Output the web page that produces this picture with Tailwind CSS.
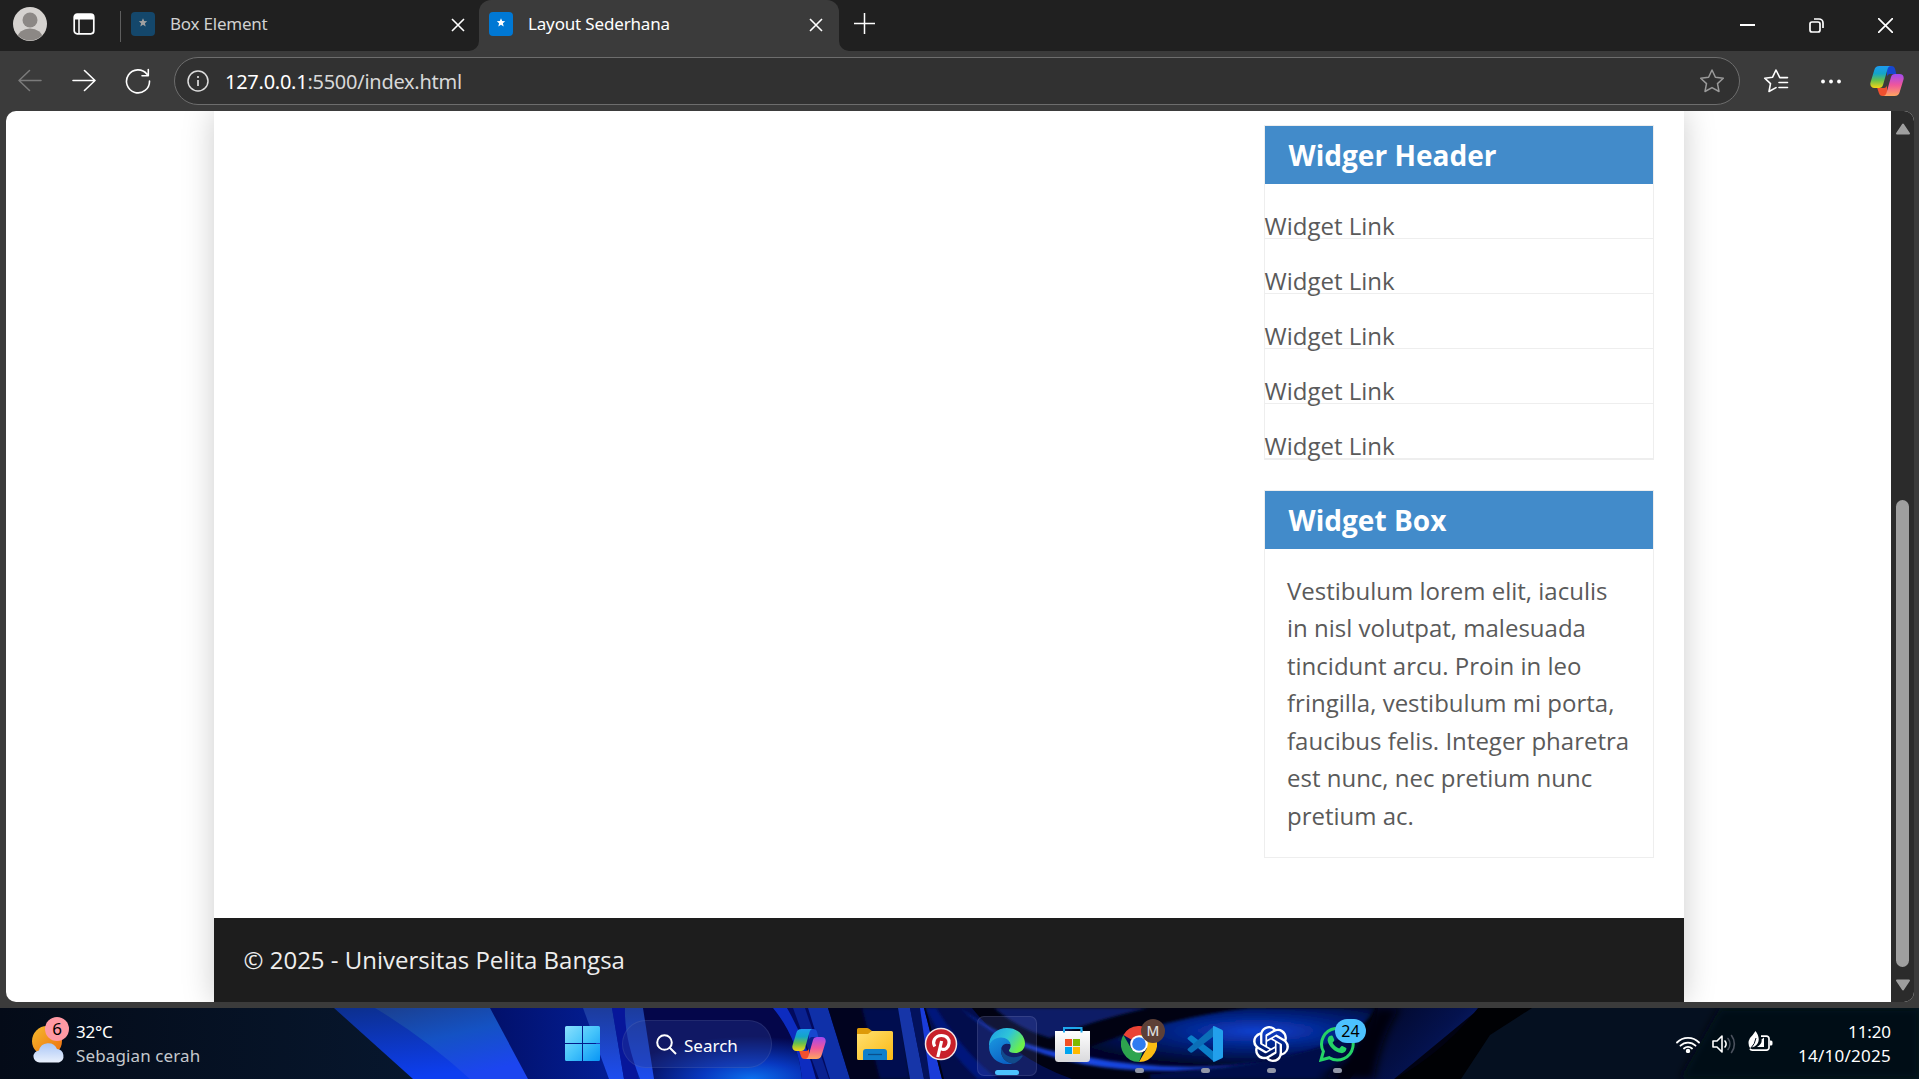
<!DOCTYPE html>
<html lang="id">
<head>
<meta charset="utf-8">
<title>Layout Sederhana</title>
<script src="https://cdn.jsdelivr.net/npm/@tailwindcss/browser@4"></script>
</head>
<body class="w-[1919px] h-[1079px] overflow-hidden flex flex-col bg-[#3b3b3b] font-['Noto_Sans',sans-serif]">

<!-- Tab strip -->
<header class="h-[51px] shrink-0 bg-[#202020] flex items-start">
  <div class="flex items-center h-12 pl-[13px]">
    <svg class="w-[34px] h-[34px]" viewBox="0 0 34 34"><defs><clipPath id="av"><circle cx="17" cy="17" r="16.5"/></clipPath></defs><circle cx="17" cy="17" r="17" fill="#d5d2cf"/><g fill="#8c8885" clip-path="url(#av)"><circle cx="17" cy="13" r="7.5"/><ellipse cx="17" cy="31" rx="12.500" ry="9.500"/></g></svg>
    <svg class="w-6 h-6 ml-[25px]" viewBox="0 0 24 24"><rect x="2.200" y="2.200" width="19.600" height="19.600" rx="3" fill="none" stroke="#fff" stroke-width="1.700"/><path d="M2 5a3 3 0 0 1 3-3h14a3 3 0 0 1 3 3v2.500H2z" fill="#fff"/><path d="M7 7v15" stroke="#fff" stroke-width="1.500"/></svg>
  </div>
  <div class="w-px h-[31px] bg-[#5e5e5e] mt-[11px] ml-6"></div>
  <div class="flex items-center h-12 ml-[10px] w-[337px] text-[#d0d0d0]">
    <svg class="w-6 h-6" viewBox="0 0 24 24"><rect width="24" height="24" rx="4" fill="#14476b"/><path d="M12 6.200l1.200 2.900 3 .2-2.300 2 .8 3.100-2.700-1.700-2.700 1.700.8-3.100-2.300-2 3-.2z" fill="#a0a0a0"/></svg>
    <span class="ml-[15px] pb-0.5 text-[17px] leading-none tracking-[-0.220px]">Box Element</span>
    <svg class="w-[14px] h-[14px] ml-auto mr-[3px] mt-px" viewBox="0 0 14 14"><path d="M1 1l12 12M13 1L1 13" stroke="#fff" stroke-width="1.600"/></svg>
  </div>
  <div class="relative flex items-center h-[51px] pb-[3px] ml-[11px] w-[360px] rounded-t-[12px] bg-[#3b3b3b] pl-[10px] text-white">
    <svg class="absolute left-[-10px] bottom-0 w-[10px] h-[10px]" viewBox="0 0 10 10"><path d="M10 0v10H0A10 10 0 0 0 10 0z" fill="#3b3b3b"/></svg>
    <svg class="absolute right-[-10px] bottom-0 w-[10px] h-[10px]" viewBox="0 0 10 10"><path d="M0 0v10h10A10 10 0 0 1 0 0z" fill="#3b3b3b"/></svg>
    <svg class="w-6 h-6" viewBox="0 0 24 24"><rect width="24" height="24" rx="4" fill="#0078d4"/><path d="M12 6.200l1.200 2.900 3 .2-2.300 2 .8 3.100-2.700-1.700-2.700 1.700.8-3.100-2.300-2 3-.2z" fill="#fff"/></svg>
    <span class="ml-[15px] pb-0.5 text-[17px] leading-none tracking-[-0.160px]">Layout Sederhana</span>
    <svg class="w-[14px] h-[14px] ml-auto mr-[16px] mt-px" viewBox="0 0 14 14"><path d="M1 1l12 12M13 1L1 13" stroke="#fff" stroke-width="1.600"/></svg>
  </div>
  <svg class="w-[21px] h-[21px] ml-[15px] mt-[13px]" viewBox="0 0 21 21"><path d="M10.500 0v21M0 10.500h21" stroke="#fff" stroke-width="1.500"/></svg>
  <div class="ml-auto flex items-center h-[51px] pr-[26px]">
    <svg class="w-[15px] h-[15px]" viewBox="0 0 15 15"><path d="M0 7h15" stroke="#fff" stroke-width="2"/></svg>
    <svg class="w-[15px] h-[15px] ml-[54px]" viewBox="0 0 15 15" fill="none" stroke="#fff" stroke-width="1.700"><rect x="1" y="4" width="10" height="10" rx="2"/><path d="M5 1h5a4 4 0 0 1 4 4v5"/></svg>
    <svg class="w-[15px] h-[15px] ml-[54px]" viewBox="0 0 15 15"><path d="M0 0l15 15M15 0L0 15" stroke="#fff" stroke-width="1.700"/></svg>
  </div>
</header>

<!-- Address bar -->
<nav class="h-[60px] shrink-0 flex items-center">
  <svg class="w-6 h-6 ml-[18px]" viewBox="0 0 24 24" fill="none" stroke="#7b7b7b" stroke-width="1.500" stroke-linecap="round" stroke-linejoin="round"><path d="M23 11.500H1M11.500 1.500L1 11.500l10.500 10"/></svg>
  <svg class="w-6 h-6 ml-[30px]" viewBox="0 0 24 24" fill="none" stroke="#fff" stroke-width="1.600" stroke-linecap="round" stroke-linejoin="round"><path d="M1 11.500h22M12.500 1.500L23 11.500l-10.500 10"/></svg>
  <svg class="w-[26px] h-[26px] ml-[29px]" viewBox="0 0 26 26" fill="none" stroke="#fff" stroke-width="1.600" stroke-linecap="round" stroke-linejoin="round"><path d="M24.500 13A11.500 11.500 0 1 1 22 6.200M23.300 1.500v6.300h-6.300"/></svg>
  <div class="ml-[23px] w-[1566px] h-12 rounded-full border border-[#6d6d6d] bg-[#313131] flex items-center pl-[12px] pr-[14px]">
    <svg class="w-[22px] h-[22px]" viewBox="0 0 22 22" fill="none" stroke="#ddd" stroke-width="1.500"><circle cx="11" cy="11" r="10"/><path d="M11 10v6M11 6v2" stroke-width="1.700"/></svg>
    <span class="ml-[16px] pt-0.5 text-[20px] leading-none tracking-[-0.260px] text-[#d8d8d8]"><span class="text-white">127.0.0.1</span>:5500/index.html</span>
    <svg class="w-[26px] h-[26px] ml-auto" viewBox="0 0 26 26" fill="none" stroke="#9a9a9a" stroke-width="1.500" stroke-linejoin="round"><path d="M13 2l3.400 7.200 7.900 1-5.800 5.400 1.500 7.900-7-3.900-7 3.900 1.500-7.900L1.700 10.200l7.900-1z"/></svg>
  </div>
  <svg class="w-[26px] h-[26px] ml-[23px]" viewBox="0 0 26 26" fill="none" stroke="#fff" stroke-width="1.600" stroke-linejoin="round" stroke-linecap="round"><path d="M24.500 9.600h-7.700L13 2 9.600 9.200l-7.900 1 5.800 5.400L6 23.500l7-3.900M16 14.500h8.500M16 19.500h8.500"/></svg>
  <svg class="w-5 h-5 ml-[32px]" viewBox="0 0 20 20" fill="#fff"><circle cx="2" cy="10.500" r="1.900"/><circle cx="10" cy="10.500" r="1.900"/><circle cx="18" cy="10.500" r="1.900"/></svg>
  <svg class="w-[34px] h-8 ml-[29px]" viewBox="0 0 34 32">
    <defs>
      <linearGradient id="cpA" x1="0" y1="0" x2="0" y2="1"><stop offset="0" stop-color="#1e9bf0"/><stop offset=".35" stop-color="#14a5c8"/><stop offset=".65" stop-color="#67c04c"/><stop offset="1" stop-color="#f8d314"/></linearGradient>
      <linearGradient id="cpB" x1="0" y1="0" x2="0" y2="1"><stop offset="0" stop-color="#a04af0"/><stop offset=".5" stop-color="#f0569c"/><stop offset="1" stop-color="#ffa660"/></linearGradient>
    </defs>
    <path d="M17 1h4.500c2 0 3 1 3.600 3l1.200 5H20c-1.500 0-2.500 1-3 2.500z" fill="#1747cf"/>
    <path d="M17 31h-4.500c-2 0-3-1-3.600-3l-1.700-5H14c1.500 0 2.500-1 3-2.500z" fill="#f0502f"/>
    <path d="M9.500 1H21c-2 0-3 1.500-3.500 3.200L13 20c-.6 2-1.800 3-4 3H4.500c-3.200 0-4.800-2.200-4-5.500L4.300 5C5 2.500 6.500 1 9.500 1z" fill="url(#cpA)"/>
    <path d="M24.500 31H13c2 0 3-1.500 3.500-3.200L21 12c.6-2 1.800-3 4-3h4.500c3.200 0 4.800 2.200 4 5.500L29.700 27c-.7 2.500-2.200 4-5.200 4z" fill="url(#cpB)"/>
  </svg>
</nav>

<!-- Viewport -->
<main class="h-[891px] shrink-0 mx-[6px] mr-[5px] rounded-[10px] overflow-hidden bg-white flex">
  <div class="w-[1885px] overflow-hidden pl-[208px]">
    <div class="w-[1470px] h-[891px] bg-white shadow-[0_0_30px_#ccc] flex flex-col font-['Open_Sans',sans-serif] text-[24px] leading-[37.5px] text-[#5a5a5a]">
      <aside class="w-[390px] ml-auto mr-[30px] pt-[14px] flex flex-col gap-[30px]">
        <section class="h-[335px] border border-[#eee]">
          <h3 class="h-[58px] bg-[#428bca] text-white font-bold text-[28.080px] leading-[59px] pl-[23.500px]">Widger Header</h3>
          <ul class="indent-[-0.500px]">
            <li class="h-[55px] pt-[23px] border-b border-[#eee]">Widget Link</li>
            <li class="h-[55px] pt-[23px] border-b border-[#eee]">Widget Link</li>
            <li class="h-[55px] pt-[23px] border-b border-[#eee]">Widget Link</li>
            <li class="h-[55px] pt-[23px] border-b border-[#eee]">Widget Link</li>
            <li class="h-[55px] pt-[23px] border-b border-[#eee]">Widget Link</li>
          </ul>
        </section>
        <section class="h-[368px] border border-[#eee]">
          <h3 class="h-[58px] bg-[#428bca] text-white font-bold text-[28.080px] leading-[59px] pl-[23.500px]">Widget Box</h3>
          <p class="pt-[22.500px] pl-[22px] pr-[22px]">Vestibulum lorem elit, iaculis in nisl volutpat, malesuada tincidunt arcu. Proin in leo fringilla, vestibulum mi porta, faucibus felis. Integer pharetra est nunc, nec pretium nunc pretium ac.</p>
        </section>
      </aside>
      <footer class="mt-auto h-[84px] bg-[#1d1d1d] text-[#eee] pl-[29.500px] pt-[23px]">© 2025 - Universitas Pelita Bangsa</footer>
    </div>
  </div>
  <div class="w-[23px] bg-[#2b2b2b] flex flex-col items-center">
    <svg class="w-4 h-3 mt-3" viewBox="0 0 16 12"><path d="M8 1.500L14 10.500H2z" fill="#9f9f9f" stroke="#9f9f9f" stroke-width="2" stroke-linejoin="round"/></svg>
    <div class="w-[13px] h-[467px] mt-auto mb-3 rounded-full bg-[#9f9f9f]"></div>
    <svg class="w-4 h-3 mb-[11px]" viewBox="0 0 16 12"><path d="M8 10.500L14 1.500H2z" fill="#9f9f9f" stroke="#9f9f9f" stroke-width="2" stroke-linejoin="round"/></svg>
  </div>
</main>

<!-- Taskbar -->
<footer class="relative mt-[6px] h-[71px] shrink-0 bg-[#050d1b] flex text-white">
  <svg class="absolute inset-0 w-full h-full" viewBox="0 0 1919 71" preserveAspectRatio="none">
    <defs>
      <linearGradient id="w0"><stop offset="0" stop-color="#040b18"/><stop offset="1" stop-color="#07172e"/></linearGradient>
      <linearGradient id="w1" x1="0" y1="0" x2="0.300" y2="1"><stop offset="0" stop-color="#0c2f8c"/><stop offset="1" stop-color="#0d3ef0"/></linearGradient>
      <linearGradient id="w2" x1="0" y1="0" x2="0.500" y2="1"><stop offset="0" stop-color="#1b3f8e"/><stop offset=".5" stop-color="#1452c4"/><stop offset="1" stop-color="#1c45f0"/></linearGradient>
      <linearGradient id="w3"><stop offset="0" stop-color="#02106a"/><stop offset="1" stop-color="#0322a0"/></linearGradient>
      <linearGradient id="w4" x1="0" y1="0" x2="0" y2="1"><stop offset="0" stop-color="#1c3c9c"/><stop offset="1" stop-color="#1d4df0"/></linearGradient>
      <radialGradient id="w5" cx=".58" cy="1" r=".6"><stop offset="0" stop-color="#0b70ee"/><stop offset=".4" stop-color="#0838c0"/><stop offset="1" stop-color="#04064a"/></radialGradient>
      <radialGradient id="w6" cx=".62" cy=".4" r=".6"><stop offset="0" stop-color="#0a40d0"/><stop offset=".5" stop-color="#04207c"/><stop offset="1" stop-color="#02062a"/></radialGradient>
      <linearGradient id="w8" x1="0" y1="0" x2="1" y2=".5"><stop offset="0" stop-color="#01041c"/><stop offset=".7" stop-color="#04124e"/><stop offset="1" stop-color="#0a2070"/></linearGradient>
      <linearGradient id="w9"><stop offset="0" stop-color="#0a2aa8"/><stop offset=".3" stop-color="#1a48e4"/><stop offset=".75" stop-color="#1238c4"/><stop offset="1" stop-color="#051a70"/></linearGradient>
      <filter id="soft"><feGaussianBlur stdDeviation="1.500"/></filter>
      <filter id="soft3"><feGaussianBlur stdDeviation="4"/></filter>
    </defs>
    <rect width="420" height="71" fill="url(#w0)"/>
    <path d="M334 0H500L540 71H413z" fill="url(#w1)"/>
    <path d="M375 0H492L530 71H470Q425 30 375 0z" fill="url(#w2)"/>
    <path d="M490 0H640V71H528z" fill="url(#w3)"/>
    <path d="M583 0h29l12 71h-15z" fill="url(#w4)"/>
    <path d="M612 0h20l6 71h-14z" fill="#07169a"/>
    <path d="M630 0H840V71H650z" fill="url(#w5)"/>
    <path d="M625 0h18l11 71h-14Q624 30 625 0z" fill="url(#w4)"/>
    <path d="M773 0H930V71H802Q798 30 773 0z" fill="#020a5e"/>
    <path d="M773 0h14q20 35 29 71h-14Q798 30 773 0z" fill="#0d2cc0"/>
    <path d="M793 0h12l24 71h-10z" fill="#0a2190"/>
    <path d="M808 0h20l22 71h-20z" fill="#0f30a8"/>
    <path d="M828 0h72l12 71h-62z" fill="#01031f"/>
    <path d="M862 0h38l10 71h-30z" fill="#020b50" filter="url(#soft)"/>
    <path d="M898 0h12l14 71h-14z" fill="#1635a8"/>
    <path d="M910 0h12l16 71h-14z" fill="#03125c"/>
    <path d="M920 0h4l18 71h-12z" fill="#1a3cd8"/>
    <path d="M924 0H1480V71H942z" fill="#010212"/>
    <path d="M926 0h46q40 50 100 71H944z" fill="#020d4c"/>
    <path d="M926 0h10q30 48 62 71h-20Q944 40 926 0z" fill="#04177c" filter="url(#soft)"/>
    <path d="M994 0h154q-60 14-98 30-30-8-56-30z" fill="#0b1f66" filter="url(#soft)"/>
    <path d="M1060 50Q1160 10 1250 0H1376q-12 24-66 44-90 24-250 6z" fill="url(#w6)" filter="url(#soft)"/>
    <path d="M1150 66q140-8 215-44l-14 30-14 19H1150z" fill="#02094a" filter="url(#soft)"/>
    <path d="M960 0q54 40 120 48 160 30 284-24-80 34-190 39-140 2-214-63z" fill="url(#w9)" filter="url(#soft)"/>
    <path d="M1378 0h102l-86 71h-44q24-30 28-71z" fill="url(#w8)"/>
    <path d="M1376 0h24q-20 30-26 71h-56q40-20 58-71z" fill="#01020a" filter="url(#soft3)"/>
    <path d="M1478 0h54v71H1395q50-28 83-71z" fill="#000104"/>
    <path d="M1532 0H1919V71H1461l29-44z" fill="#051020"/>
    <path d="M1720 0H1919V71H1680z" fill="#040a17" filter="url(#soft3)"/>
  </svg>

  <div class="relative w-[549px] flex items-center">
    <svg class="w-9 h-[44px] ml-[31px] -mt-[2px]" viewBox="0 0 36 44">
      <defs><linearGradient id="sun" x1="0" y1="0" x2="1" y2="1"><stop offset="0" stop-color="#f5bb2c"/><stop offset="1" stop-color="#ee6c10"/></linearGradient><linearGradient id="cl" x1="0" y1="0" x2="0" y2="1"><stop offset="0" stop-color="#a9c6f7"/><stop offset="1" stop-color="#e9f0fc"/></linearGradient></defs>
      <circle cx="16" cy="20" r="15" fill="url(#sun)"/><path d="M9 41.500a6 6 0 0 1-1-12A9.500 9.500 0 0 1 26 28a7 7 0 0 1 2 13.500z" fill="url(#cl)"/></svg>
    <div class="absolute left-[45px] top-[9px] w-6 h-6 rounded-full bg-[#ff99a4] text-black text-[17px] leading-6 text-center">6</div>
    <div class="ml-[9px] text-[17px] leading-6 flex flex-col"><span class="tracking-[-0.200px]">32°C</span><span class="tracking-[0.120px] text-[#c4c8cd]">Sebagian cerah</span></div>
  </div>

  <div class="relative flex items-center">
    <div class="w-[66px] flex justify-center"><svg class="w-[35px] h-[35px]" viewBox="0 0 35 35"><defs><linearGradient id="win" x1="0" y1="0" x2="1" y2="1"><stop offset="0" stop-color="#8ae0fd"/><stop offset=".5" stop-color="#45c4fb"/><stop offset="1" stop-color="#0895f5"/></linearGradient></defs><path fill="url(#win)" d="M1.500 0H17v17H0V1.500Q0 0 1.500 0zM18 0h15.500Q35 0 35 1.500V17H18zM0 18h17v17H1.500Q0 35 0 33.500zM18 18h17v15.500q0 1.500-1.500 1.500H18z"/></svg></div>
    <div class="ml-[7px] w-[150px] h-12 mt-px rounded-full bg-[#283c96]/35 border border-white/8 flex items-center pl-[33px]">
      <svg class="w-[21px] h-[21px]" viewBox="0 0 21 21" fill="none" stroke="#fff" stroke-width="2"><circle cx="8.500" cy="8.500" r="7.300"/><path d="M13.500 13.500l6.500 6.500"/></svg>
      <span class="ml-[7px] pt-0.5 text-[17px] leading-none">Search</span>
    </div>
    <div class="ml-1 w-[66px] flex justify-center"><svg class="w-[34px] h-8" viewBox="0 0 34 32"><path d="M17 1h4.500c2 0 3 1 3.600 3l1.200 5H20c-1.500 0-2.500 1-3 2.500z" fill="#1747cf"/><path d="M17 31h-4.500c-2 0-3-1-3.600-3l-1.700-5H14c1.500 0 2.500-1 3-2.500z" fill="#f0502f"/><path d="M9.500 1H21c-2 0-3 1.500-3.500 3.200L13 20c-.6 2-1.800 3-4 3H4.500c-3.200 0-4.800-2.200-4-5.500L4.300 5C5 2.500 6.500 1 9.500 1z" fill="url(#cpA)"/><path d="M24.500 31H13c2 0 3-1.500 3.500-3.200L21 12c.6-2 1.800-3 4-3h4.500c3.200 0 4.800 2.200 4 5.500L29.700 27c-.7 2.500-2.200 4-5.200 4z" fill="url(#cpB)"/></svg></div>
    <div class="w-[66px] flex justify-center"><svg class="w-9 h-[34px]" viewBox="0 0 36 34"><defs><linearGradient id="fo" x1="0" y1="0" x2="1" y2="1"><stop offset="0" stop-color="#ffe070"/><stop offset="1" stop-color="#fbb914"/></linearGradient></defs><path d="M0 8V2.500Q0 1 1.500 1H10q1 0 2 .8L15 4v6H0z" fill="#dd9a08"/><path d="M0 7h11l4-3h19.500Q36 4 36 5.500v26q0 1.500-1.500 1.500h-33Q0 33 0 31.500z" fill="url(#fo)"/><path d="M6 33v-8q0-3 3-3h18q3 0 3 3v8z" fill="#0f7fcb"/><path d="M11 27.500h14" stroke="#0a4f8c" stroke-width="1.300"/></svg></div>
    <div class="w-[66px] flex justify-center"><svg class="w-[34px] h-[34px]" viewBox="0 0 34 34"><circle cx="17" cy="17" r="15.500" fill="#c8202a" stroke="#f4e6e6" stroke-width="1.500"/><path d="M10.800 19.500C8 15 10.500 8.500 17.500 8.500c5.500 0 8 3.700 7.600 7.500-.5 4.700-4 7-6.800 6.300-1.300-.3-2-1.200-2.300-2M17.600 14L13.800 30" fill="none" stroke="#fff" stroke-width="3.200"/></svg></div>
    <div class="w-[66px] flex justify-center"><div class="relative w-[60px] h-[60px] mt-1 rounded-[7px] bg-[#5a6acb]/20 border border-white/10 flex flex-col items-center">
      <svg class="w-9 h-9 mt-[11px]" viewBox="0 0 36 36"><defs><linearGradient id="e1" x1="0" y1="0" x2="1" y2=".5"><stop offset="0" stop-color="#1c9be6"/><stop offset=".55" stop-color="#2fc5d8"/><stop offset="1" stop-color="#6cf04a"/></linearGradient><linearGradient id="e2" x1="0" y1="0" x2=".6" y2="1"><stop offset="0" stop-color="#1a97e0"/><stop offset="1" stop-color="#0b62c4"/></linearGradient></defs><path d="M0 17C0 7 8 0 18 0c11 0 18 8 18 15.500 0 6-4.500 9.500-10 9.500-4 0-6-1.300-6-2.500 0-1 1.600-1.500 1.600-4.500 0-3.500-3-7-8.600-7C6 11 1.500 14 0 19z" fill="url(#e1)"/><path d="M0 19c1-6 6-9.500 12-9.500 5 0 9 3 9.600 7C14 13.500 12 19 12 23c0 7 6 12 12 12.400-2 .6-4 .6-6 .6C8 36 0 28 0 19z" fill="url(#e2)"/><path d="M12.500 19c-2.500 8 4 17 12.500 16.400 3-1 6.500-3.600 8.500-6.800.6-1-.2-1.500-1.200-1C24 31 14 29 12.500 19z" fill="#114a8b"/></svg>
      <div class="absolute bottom-0 w-6 h-[5px] rounded-full bg-[#4cc2ff]"></div>
    </div></div>
    <div class="w-[66px] pl-[15px]"><svg class="w-[35px] h-9" viewBox="0 0 35 36"><defs><linearGradient id="st" x1="0" y1="0" x2="0" y2="1"><stop offset="0" stop-color="#fff"/><stop offset="1" stop-color="#d9d9dc"/></linearGradient></defs><path d="M9 7.500V2h17.500v5.500" fill="none" stroke="#1fa8ec" stroke-width="2"/><path d="M0 5h35v27.500q0 3.500-3.500 3.500h-28Q0 36 0 32.500z" fill="url(#st)"/><path d="M9 6.500V3.500M26.500 6.500V3.500" stroke="#1fa8ec" stroke-width="2"/><path d="M10 13h7v7h-7z" fill="#f25022"/><path d="M18 13h7v7h-7z" fill="#7fba00"/><path d="M10 21h7v7h-7z" fill="#00a4ef"/><path d="M18 21h7v7h-7z" fill="#ffb900"/></svg></div>
    <div class="relative w-[66px] h-[71px] flex justify-center items-center"><svg class="w-9 h-9" viewBox="0 0 36 36"><path d="M18 18L2.400 9A18 18 0 0 1 33.600 9z" fill="#ea4335"/><path d="M18 9h15.600A18 18 0 0 1 18 36l7.800-13.500z" fill="#fbbc12"/><path d="M2.400 9l7.800 13.500L18 27l3.500-.5L18 36A18 18 0 0 1 2.400 9z" fill="#2da44e"/><circle cx="18" cy="18" r="8.800" fill="#fff"/><circle cx="18" cy="18" r="6.800" fill="#2f7cf0"/></svg>
      <div class="absolute left-[35px] top-[11px] w-6 h-6 rounded-full bg-[#5d4037] text-[#ddd] text-[14px] font-medium leading-6 text-center">M</div><div class="absolute bottom-[6px] w-[9px] h-[5px] rounded-full bg-[#9297a8]"></div></div>
    <div class="relative w-[66px] h-[71px] flex justify-center items-center"><svg class="w-9 h-9" viewBox="0 0 36 36"><path d="M1 11.500l2.500-2Q4.500 9 5.500 9.700L27 26v9.800L.8 13.300Q0 12.300 1 11.500z" fill="#0a7fc9"/><path d="M1 24.500l2.500 2q1 .5 2-.2L27 10V.2L.8 22.700Q0 23.700 1 24.500z" fill="#0b6fb8"/><path d="M26 .3q.7-.5 1.500 0L35 3.800q1 .5 1 1.500v25.400q0 1-1 1.500l-7.500 3.500q-.8.400-1.500-.2z" fill="#22a0ec"/></svg><div class="absolute bottom-[6px] w-[9px] h-[5px] rounded-full bg-[#9297a8]"></div></div>
    <div class="relative w-[66px] h-[71px] flex justify-center items-center"><svg class="w-9 h-9" viewBox="0 0 24 24" fill="#fff"><path d="M22.282 9.821a5.985 5.985 0 0 0-.516-4.910 6.046 6.046 0 0 0-6.510-2.900A6.065 6.065 0 0 0 4.981 4.182a5.985 5.985 0 0 0-3.998 2.900 6.046 6.046 0 0 0 .743 7.097 5.980 5.980 0 0 0 .510 4.911 6.051 6.051 0 0 0 6.515 2.900A5.985 5.985 0 0 0 13.260 24a6.056 6.056 0 0 0 5.772-4.206 5.990 5.990 0 0 0 3.998-2.900 6.056 6.056 0 0 0-.748-7.073zM13.260 22.430a4.476 4.476 0 0 1-2.876-1.041l.141-.080 4.779-2.758a.795.795 0 0 0 .393-.681v-6.737l2.020 1.169a.071.071 0 0 1 .038.052v5.583a4.504 4.504 0 0 1-4.495 4.493zM3.600 18.304a4.470 4.470 0 0 1-.535-3.014l.142.085 4.783 2.759a.771.771 0 0 0 .780 0l5.843-3.369v2.332a.080.080 0 0 1-.033.062L9.740 19.950a4.499 4.499 0 0 1-6.140-1.646zM2.341 7.896a4.485 4.485 0 0 1 2.366-1.973V11.600a.766.766 0 0 0 .388.677l5.814 3.354-2.020 1.169a.076.076 0 0 1-.071 0l-4.830-2.787A4.504 4.504 0 0 1 2.341 7.872zm16.596 3.856l-5.833-3.387L15.119 7.200a.076.076 0 0 1 .071 0l4.830 2.791a4.494 4.494 0 0 1-.676 8.105v-5.678a.790.790 0 0 0-.407-.667zm2.011-3.024l-.142-.085-4.774-2.782a.776.776 0 0 0-.785 0L9.409 9.230V6.897a.066.066 0 0 1 .028-.062l4.830-2.787a4.499 4.499 0 0 1 6.680 4.660zM8.307 12.863l-2.020-1.164a.080.080 0 0 1-.038-.057V6.074a4.499 4.499 0 0 1 7.376-3.454l-.142.081L8.704 5.459a.795.795 0 0 0-.393.682zm1.097-2.366l2.602-1.500 2.607 1.500v3l-2.597 1.500-2.607-1.500z"/></svg><div class="absolute bottom-[6px] w-[9px] h-[5px] rounded-full bg-[#9297a8]"></div></div>
    <div class="relative w-[66px] h-[71px] flex justify-center items-center"><svg class="w-9 h-9" viewBox="0 0 36 36"><path d="M2 34l2.400-8.500A15.800 15.800 0 1 1 10.300 31.700z" fill="none" stroke="#25d366" stroke-width="3"/><path d="M12.500 9.500c.8 0 1 .1 1.400 1l1.300 3c.2.600.1 1-.3 1.500l-1.300 1.700c1.600 2.900 3.600 4.600 6.600 5.900l1.900-2.200c.4-.5.8-.5 1.300-.3l3.400 1.700c.6.300.7.600.6 1.200-.4 3-3 4.400-5.300 4.100-6.600-1-12.600-6.900-13.400-12.300-.3-2.300 1-5.300 3.800-5.300z" fill="#25d366"/></svg>
      <div class="absolute left-[31px] top-[11px] w-[31px] h-6 rounded-full bg-[#4cc2ff] text-black text-[16px] leading-6 text-center">24</div><div class="absolute bottom-[6px] w-[9px] h-[5px] rounded-full bg-[#9297a8]"></div></div>
  </div>

  <div class="relative ml-auto pr-7 flex items-center">
    <svg class="w-6 h-[18px]" viewBox="0 0 24 18" fill="none" stroke="#fff" stroke-width="1.800" stroke-linecap="round"><path d="M1 7.500a15.500 15.500 0 0 1 22 0M4.500 10.700a10.600 10.600 0 0 1 15 0M8 13.500a5.800 5.800 0 0 1 8 0"/><circle cx="12" cy="16" r="1.300" fill="#fff"/></svg>
    <svg class="w-6 h-5 ml-3" viewBox="0 0 24 20" fill="none" stroke="#fff" stroke-width="1.600" stroke-linecap="round" stroke-linejoin="round"><path d="M1 7v6h4l5 5V2L5 7zM13 7a5 5 0 0 1 0 6"/><path d="M16 4.500a9 9 0 0 1 0 11M19.500 1.500a14 14 0 0 1 0 17" stroke="#4b525e"/></svg>
    <svg class="w-[25px] h-[21px] ml-3 -mt-1" viewBox="0 0 25 21"><path d="M13 5.200h5.500A2.500 2.500 0 0 1 21 7.700v9a2.500 2.500 0 0 1-2.500 2.500H4.500A2.500 2.500 0 0 1 2 17.700" fill="none" stroke="#fff" stroke-width="1.700"/><path d="M22 9.500h1q1.500 0 1.500 1.500v2q0 1.500-1.500 1.500h-1zM13.500 8.500l2.500-2v9.500H9q5.500-3 4.500-7.500zM7.500 0c4 5 5 12-1 15.500L2 17q-3-5 0-10 3-3 5.500-7z" fill="#fff"/><path d="M3 17Q7 13 8 7" stroke="#07101e" stroke-width="1" fill="none"/></svg>
    <div class="w-[93px] ml-[25px] text-right text-[17px] leading-6 flex flex-col"><span class="tracking-[-0.100px]">11:20</span><span class="tracking-[0.250px]">14/10/2025</span></div>
  </div>
</footer>
</body>
</html>
